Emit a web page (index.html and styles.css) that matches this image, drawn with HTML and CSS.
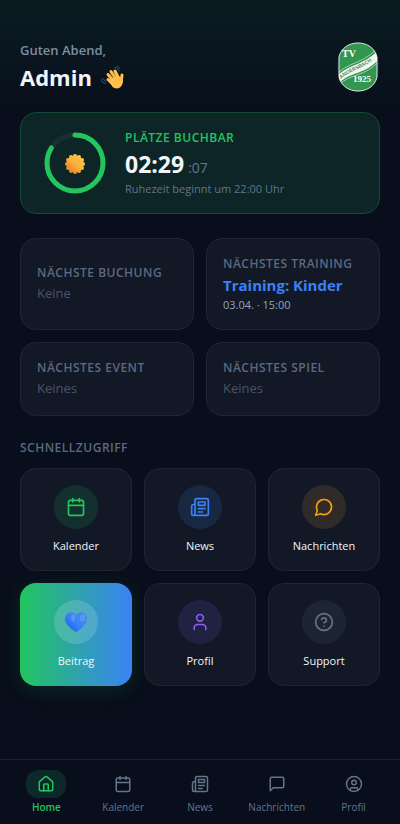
FILE: index.html
```html
<!DOCTYPE html>
<html lang="de">
<head>
    <meta charset="UTF-8">
    <meta name="viewport" content="width=device-width, initial-scale=1.0">
    <title>TV Angersbach</title>
    <link rel="stylesheet" href="styles.css">
</head>
<body>
    <!-- shared icons -->
    <svg class="sprite" aria-hidden="true">
        <symbol id="i-calendar" viewBox="0 0 24 24"><rect x="3" y="4" width="18" height="18" rx="2"/><path d="M16 2v4M8 2v4M3 10h18"/></symbol>
        <symbol id="i-news" viewBox="0 0 24 24"><path d="M4 22h16a2 2 0 0 0 2-2V4a2 2 0 0 0-2-2H8a2 2 0 0 0-2 2v16a2 2 0 0 1-4 0v-9a2 2 0 0 1 2-2h2"/><path d="M18 14h-8M15 18h-5M10 6h8v4h-8z"/></symbol>
        <symbol id="i-chat" viewBox="0 0 24 24"><path d="M7.9 20A9 9 0 1 0 4 16.1L2 22Z"/></symbol>
        <symbol id="i-message" viewBox="0 0 24 24"><path d="M21 15a2 2 0 0 1-2 2H7l-4 4V5a2 2 0 0 1 2-2h14a2 2 0 0 1 2 2z"/></symbol>
        <symbol id="i-user" viewBox="0 0 24 24"><path d="M19 21v-2a4 4 0 0 0-4-4H9a4 4 0 0 0-4 4v2"/><circle cx="12" cy="7" r="4"/></symbol>
        <symbol id="i-help" viewBox="0 0 24 24"><circle cx="12" cy="12" r="10"/><path d="M9.09 9a3 3 0 0 1 5.83 1c0 2-3 3-3 3M12 17h.01"/></symbol>
        <symbol id="i-home" viewBox="0 0 24 24"><path d="M15 21v-8a1 1 0 0 0-1-1h-4a1 1 0 0 0-1 1v8"/><path d="M3 10a2 2 0 0 1 .709-1.528l7-5.999a2 2 0 0 1 2.582 0l7 5.999A2 2 0 0 1 21 10v9a2 2 0 0 1-2 2H5a2 2 0 0 1-2-2z"/></symbol>
        <symbol id="i-profile" viewBox="0 0 24 24"><circle cx="12" cy="12" r="10"/><circle cx="12" cy="10" r="3"/><path d="M7 20.662V19a2 2 0 0 1 2-2h6a2 2 0 0 1 2 2v1.662"/></symbol>
    </svg>

    <main class="page">
        <header class="header">
            <div>
                <p class="greeting">Guten Abend,</p>
                <h1 class="name">Admin
                    <svg class="wave" viewBox="0 0 24 24" aria-hidden="true">
                        <path class="wave-line" d="M14 2.500q3.500-1 5.500 4M16.500 1q2.500.5 3.500 3M1 14q.5 4 5 4.500M3 13q.5 2.500 3 3"/>
                        <path class="wave-finger" d="M8 14.500l5 5M8 9.500l6 7M11 6.500l6 9M15 6l4 8M22 10l-1 8"/>
                        <path class="wave-hand" d="M9 15l9-5 4.500 5q1 5-2.500 7.500-4 2-7.500-.5z"/>
                        <path class="wave-crease" d="M9.500 9l3 4M13 7.500l2.500 4"/>
                    </svg>
                </h1>
            </div>
            <svg class="logo" viewBox="0 0 44 54" role="img" aria-label="TV Angersbach 1925">
                <defs>
                    <clipPath id="crest"><path d="M3 17C5 8 13 3 22 3s17 5 19 14v20c-2 9-10 14-19 14S5 46 3 37z"/></clipPath>
                    <path id="band" d="M5 39C15 29.500 29 29.500 43 14"/>
                </defs>
                <ellipse cx="22" cy="27" rx="21" ry="25" fill="#17203a"/>
                <path d="M3 17C5 8 13 3 22 3s17 5 19 14v20c-2 9-10 14-19 14S5 46 3 37z" fill="#309650" stroke="#dce9e0"/>
                <g clip-path="url(#crest)">
                    <path d="M1 36C14 23 28 26 43 9v10C29 35 15 31 3 43z" fill="#f2f7f3"/>
                    <path d="M1 34C14 21 28 24 42 7M3 45C15 33 29 37 43 21" fill="none" stroke="#d8e8dc" stroke-width=".7"/>
                </g>
                <text class="crest-text" x="6" y="17" font-size="10">TV</text>
                <text class="crest-text" x="17" y="42" font-size="9">1925</text>
                <text class="crest-band" font-size="5"><textPath href="#band">ANGERSBACH</textPath></text>
            </svg>
        </header>

        <section class="hero">
            <svg class="ring" viewBox="0 0 68 68" aria-hidden="true">
                <defs>
                    <linearGradient id="sun" gradientUnits="userSpaceOnUse" x1="42" y1="27" x2="26" y2="44"><stop offset="0" stop-color="#ffcc44"/><stop offset=".5" stop-color="#f8b03a"/><stop offset="1" stop-color="#e5742b"/></linearGradient>
                </defs>
                <circle class="ring-track" cx="34" cy="34" r="28"/>
                <circle class="ring-value" cx="34" cy="34" r="28" pathLength="100" stroke-dasharray="84 100" transform="rotate(-90 34 34)"/>
                <g fill="url(#sun)">
                    <circle cx="34" cy="35" r="8.500"/>
                    <circle cx="34" cy="27" r="2"/><circle cx="38" cy="28" r="2"/><circle cx="41" cy="31" r="2"/><circle cx="42" cy="35" r="2"/>
                    <circle cx="41" cy="39" r="2"/><circle cx="38" cy="42" r="2"/><circle cx="34" cy="43" r="2"/><circle cx="30" cy="42" r="2"/>
                    <circle cx="27" cy="39" r="2"/><circle cx="26" cy="35" r="2"/><circle cx="27" cy="31" r="2"/><circle cx="30" cy="28" r="2"/>
                </g>
            </svg>
            <div>
                <p class="hero-label">PLÄTZE BUCHBAR</p>
                <p class="hero-time">02:29 <span class="hero-seconds">:07</span></p>
                <p class="hero-note">Ruhezeit beginnt um 22:00 Uhr</p>
            </div>
        </section>

        <section class="stats">
            <div class="stat">
                <h2 class="stat-label">NÄCHSTE BUCHUNG</h2>
                <p class="stat-empty">Keine</p>
            </div>
            <div class="stat">
                <h2 class="stat-label">NÄCHSTES TRAINING</h2>
                <p class="stat-value">Training: Kinder</p>
                <p class="stat-date">03.04. · 15:00</p>
            </div>
            <div class="stat">
                <h2 class="stat-label">NÄCHSTES EVENT</h2>
                <p class="stat-empty">Keines</p>
            </div>
            <div class="stat">
                <h2 class="stat-label">NÄCHSTES SPIEL</h2>
                <p class="stat-empty">Keines</p>
            </div>
        </section>

        <h2 class="section-title">SCHNELLZUGRIFF</h2>
        <section class="quick">
            <a href="#kalender" class="tile">
                <span class="tile-icon green"><svg class="icon"><use href="#i-calendar"/></svg></span>
                Kalender
            </a>
            <a href="#news" class="tile">
                <span class="tile-icon blue"><svg class="icon"><use href="#i-news"/></svg></span>
                News
            </a>
            <a href="#nachrichten" class="tile">
                <span class="tile-icon orange"><svg class="icon"><use href="#i-chat"/></svg></span>
                Nachrichten
            </a>
            <a href="#beitrag" class="tile tile-active">
                <span class="tile-icon light">
                    <svg class="heart" viewBox="0 0 24 24" aria-hidden="true">
                        <defs>
                            <linearGradient id="heart" x1="1" y1="0" x2="0" y2="1"><stop offset="0" stop-color="#4a8cf5"/><stop offset=".5" stop-color="#3b82f6"/><stop offset="1" stop-color="#0f5fe8"/></linearGradient>
                        </defs>
                        <path fill="url(#heart)" d="M12 5.500C10 1.500 5 1.500 2.500 4.500 0 8 1 12 4 15.500 6.500 18.500 9.500 21 12 22c2.500-1 5.500-3.500 8-6.500 3-3.500 4-7.500 1.500-11C19 1.500 14 1.500 12 5.500z"/>
                        <ellipse cx="9" cy="8" rx="2" ry="3.500" fill="#6ba2ff" opacity=".6"/>
                        <ellipse cx="18.500" cy="8" rx="2.500" ry="3.500" fill="#6ba2ff" opacity=".6"/>
                    </svg>
                </span>
                Beitrag
            </a>
            <a href="#profil" class="tile">
                <span class="tile-icon purple"><svg class="icon"><use href="#i-user"/></svg></span>
                Profil
            </a>
            <a href="#support" class="tile">
                <span class="tile-icon gray"><svg class="icon"><use href="#i-help"/></svg></span>
                Support
            </a>
        </section>
    </main>

    <nav class="nav">
        <a href="#home" class="nav-item active"><span class="nav-icon"><svg class="icon"><use href="#i-home"/></svg></span>Home</a>
        <a href="#kalender" class="nav-item"><span class="nav-icon"><svg class="icon"><use href="#i-calendar"/></svg></span>Kalender</a>
        <a href="#news" class="nav-item"><span class="nav-icon"><svg class="icon"><use href="#i-news"/></svg></span>News</a>
        <a href="#nachrichten" class="nav-item"><span class="nav-icon"><svg class="icon"><use href="#i-message"/></svg></span>Nachrichten</a>
        <a href="#profil" class="nav-item"><span class="nav-icon"><svg class="icon"><use href="#i-profile"/></svg></span>Profil</a>
    </nav>
</body>
</html>
```
FILE: styles.css
```css
* {
    box-sizing: border-box;
    margin: 0;
    padding: 0;
}
body {
    min-height: 100vh;
    font-family: "Open Sans", "Noto Sans", sans-serif;
    color: #f1f5f9;
    background: #080e1b linear-gradient(#0a1c22, #080e1b) no-repeat 0 0 / 100% 120px;
}
a {
    text-decoration: none;
    color: inherit;
}
.sprite {
    display: none;
}
.icon {
    width: 20px;
    height: 20px;
    fill: none;
    stroke: currentColor;
    stroke-width: 2;
    stroke-linecap: round;
    stroke-linejoin: round;
}
.page {
    padding: 40px 20px 88px;
}

/* header */
.header {
    display: flex;
    justify-content: space-between;
    align-items: center;
    margin-bottom: 18px;
}
.greeting {
    font-size: 13px;
    font-weight: 600;
    line-height: 20px;
    color: #7c8da3;
}
.name {
    display: flex;
    align-items: center;
    gap: 8px;
    font-size: 22px;
    font-weight: 700;
    line-height: 34px;
}
.wave {
    width: 24px;
    height: 24px;
}
.wave-hand {
    fill: #ffc04a;
}
.wave-finger {
    fill: none;
    stroke: #ffc04a;
    stroke-width: 3;
    stroke-linecap: round;
}
.wave-line {
    fill: none;
    stroke: #1f5585;
    stroke-width: 1;
}
.wave-crease {
    fill: none;
    stroke: #e59a35;
    stroke-width: 1;
}
.logo {
    width: 44px;
    height: 54px;
}
.crest-text {
    font-family: "Liberation Serif", serif;
    font-weight: 700;
    fill: #fff;
}
.crest-band {
    font-family: "Liberation Sans", sans-serif;
    font-weight: 700;
    fill: #3f8f5a;
}

/* booking countdown */
.hero {
    display: flex;
    align-items: center;
    gap: 16px;
    padding: 16px 20px;
    margin-bottom: 24px;
    background: #0d2526;
    border: 1px solid #124a35;
    border-radius: 16px;
}
.ring {
    width: 68px;
    height: 68px;
}
.ring-track,
.ring-value {
    fill: none;
    stroke-width: 5;
}
.ring-track {
    stroke: #192f32;
}
.ring-value {
    stroke: #22c55e;
    stroke-linecap: round;
}
.hero-label {
    font-size: 12px;
    font-weight: 600;
    line-height: 18px;
    letter-spacing: 0.5px;
    color: #22c55e;
}
.hero-time {
    display: flex;
    align-items: baseline;
    gap: 4px;
    height: 34px;
    font-size: 23px;
    font-weight: 700;
    line-height: 34px;
}
.hero-seconds {
    font-size: 14px;
    font-weight: 500;
    line-height: 20px;
    color: #64748b;
}
.hero-note {
    font-size: 11px;
    line-height: 16px;
    color: #64748b;
}

/* next dates */
.stats {
    display: grid;
    grid-template-columns: 1fr 1fr;
    gap: 12px;
    margin-bottom: 24px;
}
.stat {
    display: flex;
    flex-direction: column;
    justify-content: center;
    padding: 16px;
    background: #121826;
    border: 1px solid #1e2533;
    border-radius: 16px;
}
.stat-label,
.section-title {
    font-size: 12px;
    font-weight: 600;
    line-height: 18px;
    letter-spacing: 0.5px;
    color: #5b6a80;
}
.stat-value {
    font-size: 15px;
    font-weight: 700;
    line-height: 24px;
    color: #3b82f6;
}
.stat-date {
    font-size: 11px;
    line-height: 16px;
    color: #94a3b8;
}
.stat-empty {
    font-size: 13px;
    line-height: 22px;
    color: #475569;
}

/* quick access */
.section-title {
    line-height: 16px;
    margin-bottom: 12px;
}
.quick {
    display: grid;
    grid-template-columns: repeat(3, 1fr);
    gap: 12px;
}
.tile {
    display: flex;
    flex-direction: column;
    align-items: center;
    gap: 8px;
    padding: 16px 8px;
    font-size: 11px;
    font-weight: 500;
    line-height: 17px;
    background: #121826;
    border: 1px solid #1e2533;
    border-radius: 16px;
}
.tile-active {
    background: linear-gradient(90deg, #22c55e, #3b82f6) border-box;
    border-color: transparent;
    box-shadow: 0 4px 20px rgba(34, 197, 94, 0.15);
}
.tile-icon {
    display: flex;
    align-items: center;
    justify-content: center;
    width: 44px;
    height: 44px;
    border-radius: 50%;
}
.green { color: #22c55e; background: #14302e; }
.blue { color: #3b82f6; background: #182742; }
.orange { color: #f59e0b; background: #302a28; }
.purple { color: #8b5cf6; background: #212142; }
.gray { color: #64748b; background: #1d2432; }
.light { background: rgba(255, 255, 255, 0.15); }
.heart {
    width: 24px;
    height: 24px;
}

/* bottom nav */
.nav {
    position: fixed;
    left: 0;
    right: 0;
    bottom: 0;
    display: flex;
    padding: 10px 8px;
    background: #080e1b;
    border-top: 1px solid #1a202d;
}
.nav-item {
    flex: 1 1 0;
    min-width: 0;
    display: flex;
    flex-direction: column;
    align-items: center;
    gap: 2px;
    font-size: 10px;
    font-weight: 500;
    line-height: 14px;
    color: #64748b;
}
.nav-icon {
    display: flex;
    align-items: center;
    justify-content: center;
    width: 40px;
    height: 28px;
    border-radius: 12px;
}
.nav-icon .icon {
    width: 18px;
    height: 18px;
}
.active {
    color: #22c55e;
    font-weight: 600;
}
.active .nav-icon {
    background: #0d2828;
}
```
